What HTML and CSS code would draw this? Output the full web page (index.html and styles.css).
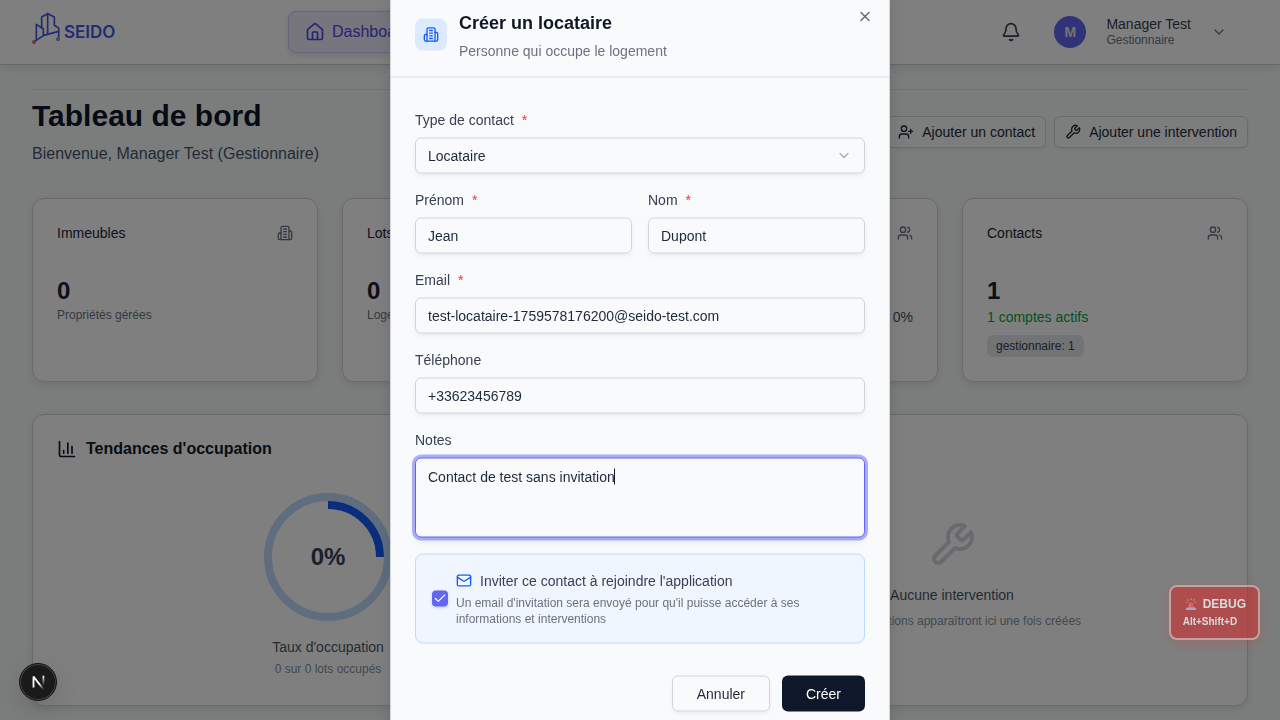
FILE: index.html
```html
<!DOCTYPE html>
<html lang="fr">
<head>
<meta charset="utf-8">
<meta name="viewport" content="width=device-width, initial-scale=1">
<title>SEIDO - Tableau de bord</title>
<link rel="stylesheet" href="styles.css">
</head>
<body>
<svg class="sprite" aria-hidden="true">
  <symbol id="i-home" viewBox="0 0 24 24"><path d="M15 21v-8a1 1 0 0 0-1-1h-4a1 1 0 0 0-1 1v8"/><path d="M3 10a2 2 0 0 1 .709-1.528l7-5.999a2 2 0 0 1 2.582 0l7 5.999A2 2 0 0 1 21 10v9a2 2 0 0 1-2 2H5a2 2 0 0 1-2-2z"/></symbol>
  <symbol id="i-bell" viewBox="0 0 24 24"><path d="M10.268 21a2 2 0 0 0 3.464 0"/><path d="M3.262 15.326A1 1 0 0 0 4 17h16a1 1 0 0 0 .74-1.673C19.41 13.956 18 12.499 18 8A6 6 0 0 0 6 8c0 4.499-1.411 5.956-2.738 7.326"/></symbol>
  <symbol id="i-chevron" viewBox="0 0 24 24"><path d="m6 9 6 6 6-6"/></symbol>
  <symbol id="i-user-plus" viewBox="0 0 24 24"><path d="M16 21v-2a4 4 0 0 0-4-4H6a4 4 0 0 0-4 4v2"/><circle cx="9" cy="7" r="4"/><path d="M19 8v6M22 11h-6"/></symbol>
  <symbol id="i-users" viewBox="0 0 24 24"><path d="M16 21v-2a4 4 0 0 0-4-4H6a4 4 0 0 0-4 4v2"/><circle cx="9" cy="7" r="4"/><path d="M22 21v-2a4 4 0 0 0-3-3.87"/><path d="M16 3.13a4 4 0 0 1 0 7.75"/></symbol>
  <symbol id="i-wrench" viewBox="0 0 24 24"><path d="M14.7 6.3a1 1 0 0 0 0 1.4l1.6 1.6a1 1 0 0 0 1.4 0l3.77-3.77a6 6 0 0 1-7.94 7.94l-6.91 6.91a2.12 2.12 0 0 1-3-3l6.91-6.91a6 6 0 0 1 7.94-7.94l-3.76 3.76z"/></symbol>
  <symbol id="i-building" viewBox="0 0 24 24"><path d="M6 22V4a2 2 0 0 1 2-2h8a2 2 0 0 1 2 2v18Z"/><path d="M6 12H4a2 2 0 0 0-2 2v6a2 2 0 0 0 2 2h2"/><path d="M18 9h2a2 2 0 0 1 2 2v9a2 2 0 0 1-2 2h-2"/><path d="M10 6h4M10 10h4M10 14h4M10 18h4"/></symbol>
  <symbol id="i-chart" viewBox="0 0 24 24"><path d="M3 3v16a2 2 0 0 0 2 2h16"/><path d="M18 17V9M13 17V5M8 17v-3"/></symbol>
  <symbol id="i-mail" viewBox="0 0 24 24"><rect width="20" height="16" x="2" y="4" rx="2"/><path d="m22 7-8.97 5.7a1.94 1.94 0 0 1-2.06 0L2 7"/></symbol>
  <symbol id="i-x" viewBox="0 0 24 24"><path d="M18 6 6 18M6 6l12 12"/></symbol>
  <symbol id="i-check" viewBox="0 0 24 24"><path d="M20 6 9 17l-5-5"/></symbol>
</svg>

<header class="topbar">
  <a class="brand" href="#">
    <svg class="brand-mark" viewBox="96 33 84 96" aria-hidden="true">
      <g fill="none" stroke="#4558e6" stroke-width="5" stroke-linejoin="round" stroke-linecap="round">
        <path d="M109 117V70l21 14v18"/>
        <path d="M125 80V48l18-10 20 10v25l13 8v30"/>
        <path d="M143 38v60"/>
        <path d="M104 121l27-18 45-12"/>
      </g>
      <circle cx="102" cy="123" r="6" fill="#e0705f"/>
      <circle cx="174" cy="115" r="6" fill="#6fb08c"/>
    </svg>
    <span class="brand-name">SEIDO</span>
  </a>
  <nav class="nav">
    <a class="nav-link" href="#"><svg class="icon icon-20"><use href="#i-home"/></svg>Dashboard</a>
  </nav>
  <div class="account">
    <button class="bell" type="button" aria-label="Notifications"><svg class="icon icon-20"><use href="#i-bell"/></svg></button>
    <button class="user" type="button">
      <span class="avatar">M</span>
      <span class="user-text"><span class="user-name">Manager Test</span><span class="user-role">Gestionnaire</span></span>
      <svg class="icon icon-16 user-arrow"><use href="#i-chevron"/></svg>
    </button>
  </div>
</header>

<main class="page">
  <section class="page-head">
    <div>
      <h1 class="page-title">Tableau de bord</h1>
      <p class="page-subtitle">Bienvenue, Manager Test (Gestionnaire)</p>
    </div>
    <div class="page-actions">
      <button class="action" type="button"><svg class="icon icon-16"><use href="#i-user-plus"/></svg>Ajouter un contact</button>
      <button class="action" type="button"><svg class="icon icon-16"><use href="#i-wrench"/></svg>Ajouter une intervention</button>
    </div>
  </section>

  <section class="stats">
    <article class="card stat">
      <header class="stat-head"><h2 class="stat-title">Immeubles</h2><svg class="icon icon-16"><use href="#i-building"/></svg></header>
      <p class="stat-value">0</p>
      <p class="stat-note">Propriétés gérées</p>
    </article>
    <article class="card stat">
      <header class="stat-head"><h2 class="stat-title">Lots</h2></header>
      <p class="stat-value">0</p>
      <p class="stat-note">Logements</p>
    </article>
    <article class="card stat">
      <header class="stat-head"><h2 class="stat-title">Occupés</h2><svg class="icon icon-16"><use href="#i-users"/></svg></header>
      <p class="stat-value">0</p>
      <p class="stat-rate">0%</p>
    </article>
    <article class="card stat">
      <header class="stat-head"><h2 class="stat-title">Contacts</h2><svg class="icon icon-16"><use href="#i-users"/></svg></header>
      <p class="stat-value">1</p>
      <p class="stat-active">1 comptes actifs</p>
      <span class="badge">gestionnaire: 1</span>
    </article>
  </section>

  <section class="panels">
    <article class="card panel">
      <h2 class="panel-title"><svg class="icon icon-20"><use href="#i-chart"/></svg>Tendances d'occupation</h2>
      <div class="occupancy">
        <div class="gauge">
          <svg class="gauge-ring" viewBox="0 0 128 128" fill="none" stroke-width="8" aria-hidden="true">
            <circle cx="64" cy="64" r="60" stroke="#bfdbfe"/>
            <path d="M64 12a52 52 0 0 1 52 52" stroke="#155dfc"/>
          </svg>
          <span class="gauge-value">0%</span>
        </div>
        <p class="panel-text">Taux d'occupation</p>
        <p class="panel-note">0 sur 0 lots occupés</p>
      </div>
    </article>
    <article class="card panel">
      <div class="empty">
        <svg class="icon icon-48"><use href="#i-wrench"/></svg>
        <p class="panel-text">Aucune intervention</p>
        <p class="panel-note">Les interventions apparaîtront ici une fois créées</p>
      </div>
    </article>
  </section>
</main>

<div class="overlay"></div>

<div class="dialog" role="dialog" aria-modal="true" aria-labelledby="dialog-title">
  <header class="dialog-head">
    <span class="dialog-icon"><svg class="icon icon-16"><use href="#i-building"/></svg></span>
    <div>
      <h2 class="dialog-title" id="dialog-title">Créer un locataire</h2>
      <p class="dialog-desc">Personne qui occupe le logement</p>
    </div>
  </header>
  <form class="form">
    <div class="field">
      <label class="label" for="type">Type de contact <span class="required">*</span></label>
      <div class="select-wrap">
        <select class="control" id="type"><option>Locataire</option></select>
        <svg class="icon icon-16 select-arrow"><use href="#i-chevron"/></svg>
      </div>
    </div>
    <div class="field-row">
      <div class="field">
        <label class="label" for="first">Prénom <span class="required">*</span></label>
        <input class="control" id="first" type="text" value="Jean">
      </div>
      <div class="field">
        <label class="label" for="last">Nom <span class="required">*</span></label>
        <input class="control" id="last" type="text" value="Dupont">
      </div>
    </div>
    <div class="field">
      <label class="label" for="email">Email <span class="required">*</span></label>
      <input class="control" id="email" type="email" value="test-locataire-1759578176200@seido-test.com">
    </div>
    <div class="field">
      <label class="label" for="phone">Téléphone</label>
      <input class="control" id="phone" type="tel" value="+33623456789">
    </div>
    <div class="field">
      <label class="label" for="notes">Notes</label>
      <div class="notes-wrap">
        <textarea class="control notes is-active" id="notes">Contact de test sans invitation</textarea>
        <span class="caret"></span>
      </div>
    </div>
    <div class="invite">
      <span class="check">
        <input class="check-input" id="invite" type="checkbox" checked>
        <svg class="icon check-mark"><use href="#i-check"/></svg>
      </span>
      <div class="invite-body">
        <label class="invite-label" for="invite"><svg class="icon icon-16"><use href="#i-mail"/></svg>Inviter ce contact à rejoindre l'application</label>
        <p class="invite-note">Un email d'invitation sera envoyé pour qu'il puisse accéder à ses informations et interventions</p>
      </div>
    </div>
    <div class="form-actions">
      <button class="btn btn-outline" type="button">Annuler</button>
      <button class="btn btn-primary" type="submit">Créer</button>
    </div>
  </form>
  <button class="close" type="button" aria-label="Fermer"><svg class="icon icon-16"><use href="#i-x"/></svg></button>
</div>

<button class="dev-button" type="button" aria-label="Next.js">
  <svg class="dev-mark" viewBox="0 0 40 40" fill="none" aria-hidden="true">
    <defs>
      <linearGradient id="g1" x1="15" y1="14" x2="26" y2="27" gradientUnits="userSpaceOnUse"><stop offset=".6" stop-color="#fff"/><stop offset="1" stop-color="#fff" stop-opacity=".1"/></linearGradient>
      <linearGradient id="g2" x1="26" y1="13" x2="26" y2="24" gradientUnits="userSpaceOnUse"><stop stop-color="#fff"/><stop offset="1" stop-color="#fff" stop-opacity="0"/></linearGradient>
    </defs>
    <path d="M15 26V14l11 14" stroke="url(#g1)" stroke-width="2" stroke-linejoin="bevel"/>
    <path d="M26 13v11" stroke="url(#g2)" stroke-width="2"/>
  </svg>
</button>

<button class="debug" type="button">
  <span class="debug-title">
    <svg class="siren" viewBox="0 0 16 16" aria-hidden="true">
      <path d="M8 2v2M4.500 3l1 2M11.500 3l-1 2M3 6l1.500.500M13 6l-1.500.500" stroke="#f5c542" stroke-width=".8"/>
      <path d="M5 12l1-5q2-2 4 0l1 5z" fill="#f0506a"/>
      <path d="M7 8v3" stroke="#ff9bab" stroke-width=".8"/>
      <path d="M3 13q0-1.500 1.500-1.500h7q1.500 0 1.500 1.500v1h-10z" fill="#b7b9e6"/>
    </svg>DEBUG</span>
  <span class="debug-keys">Alt+Shift+D</span>
</button>
</body>
</html>
```

FILE: styles.css
```css
* { box-sizing: border-box; margin: 0; }

body {
  min-height: 100vh;
  overflow: hidden;
  background: #f7fbf9;
  color: #111827;
  font: 14px/20px "Liberation Sans", Arial, sans-serif;
}

button, input, select, textarea { font: inherit; color: inherit; }
button { background: none; border: 0; padding: 0; }
a { color: inherit; text-decoration: none; }

.sprite { position: absolute; width: 0; height: 0; }
.icon { flex: none; fill: none; stroke: currentColor; stroke-width: 2; stroke-linecap: round; stroke-linejoin: round; }
.icon-16 { width: 16px; height: 16px; }
.icon-20 { width: 20px; height: 20px; }
.icon-48 { width: 48px; height: 48px; }

/* Top bar */
.topbar {
  display: flex;
  align-items: center;
  height: 65px;
  padding: 0 32px;
  background: #fff;
  border-bottom: 1px solid #cbd0dc;
  box-shadow: 0 4px 8px rgba(15, 23, 42, .08);
}
.brand { flex: 0 0 256px; display: flex; align-items: center; gap: 4px; padding-bottom: 9px; }
.brand-mark { width: 28px; height: 32px; }
.brand-name { padding-top: 9px; color: #4558e6; font: 600 17px/20px Inter, sans-serif; }
.nav-link {
  display: flex;
  align-items: center;
  gap: 7px;
  height: 42px;
  padding: 0 16px;
  border: 1px solid #cfcaf8;
  border-radius: 8px;
  background: #eeebfd;
  box-shadow: 0 2px 6px rgba(15, 23, 42, .12);
  color: #5048e5;
  font-size: 16px;
}
.account { display: flex; align-items: center; margin-left: auto; padding-right: 21px; color: #364153; }
.bell { display: flex; padding: 10px; margin-right: 23px; }
.user { display: flex; align-items: center; text-align: left; }
.avatar {
  display: grid;
  place-items: center;
  width: 32px;
  height: 32px;
  margin-right: 20px;
  border-radius: 50%;
  background: #6366f1;
  color: #e8e8ec;
  font-weight: bold;
}
.user-text { display: grid; margin-right: 20px; line-height: 16px; }
.user-role { color: #6a7282; font-size: 12px; }
.user-arrow { color: #6a7282; }

/* Page */
.page { display: grid; gap: 32px; margin: 24px 32px; border-top: 1px solid #e1e6e4; }
.page-head { display: flex; justify-content: space-between; align-items: center; padding-top: 8px; min-height: 76px; }
.page-title { font: bold 30px/36px "Liberation Sans", Arial, sans-serif; color: #0f172b; }
.page-subtitle { margin-top: 8px; color: #45556c; font-size: 16px; line-height: 24px; }
.page-actions { display: flex; gap: 8px; }
.action {
  display: flex;
  align-items: center;
  gap: 8px;
  height: 32px;
  padding: 0 10px;
  border: 1px solid #d1d5db;
  border-radius: 6px;
  background: #f9fafb;
  box-shadow: 0 2px 4px rgba(15, 23, 42, .06);
  color: #1e293b;
}
.card {
  border: 1px solid #d1d5d9;
  border-radius: 12px;
  background: #fff;
  box-shadow: 0 3px 8px rgba(15, 23, 42, .1);
}
.stats { display: grid; grid-template-columns: repeat(4, 1fr); gap: 24px; }
.stat { min-height: 184px; padding: 24px; }
.stat-head { display: flex; justify-content: space-between; align-items: center; margin-bottom: 32px; color: #6a7282; }
.stat-title { font-size: 14px; line-height: 20px; font-weight: normal; color: #1e2433; }
.stat-value { font-size: 24px; line-height: 32px; font-weight: bold; color: #1b2130; }
.stat-note { color: #6a7282; font-size: 12px; line-height: 16px; }
.stat-rate { text-align: right; color: #45505f; }
.stat-active { color: #00a63e; }
.badge {
  display: inline-block;
  margin-top: 8px;
  padding: 3px 9px;
  border-radius: 6px;
  background: #e2e6eb;
  color: #334155;
  font-size: 12px;
  line-height: 16px;
}
.panels { display: grid; grid-template-columns: 1fr 1fr; gap: 32px; }
.panel { min-height: 292px; padding: 24px; display: flex; flex-direction: column; }
.panel-title { display: flex; align-items: center; gap: 9px; font-size: 16px; line-height: 20px; }
.occupancy { display: grid; justify-items: center; padding-top: 34px; }
.gauge { display: grid; place-items: center; width: 128px; height: 128px; margin-bottom: 16px; }
.gauge-ring, .gauge-value { grid-area: 1 / 1; }
.gauge-ring { width: 128px; height: 128px; }
.gauge-value { font-size: 24px; line-height: 32px; font-weight: bold; color: #364153; }
.panel-text { color: #4a5565; }
.panel-note { margin-top: 4px; color: #8a90a0; font-size: 12px; line-height: 16px; }
.empty { display: grid; justify-items: center; margin: auto; padding-top: 29px; color: #d1d5db; }
.empty .panel-text { margin-top: 16px; }
.empty .panel-note { margin-top: 8px; }

/* Dialog */
.overlay { position: fixed; inset: 0; background: rgba(0, 0, 0, .5); }
.dialog {
  position: fixed;
  top: 50%;
  left: 50%;
  width: 500px;
  max-width: 100%;
  transform: translate(-50%, -50%);
  border: 1px solid #d1d5db;
  background: #f9fafc;
  box-shadow: 0 8px 16px rgba(0, 0, 0, .12);
}
.dialog-head { display: flex; align-items: center; gap: 12px; padding: 16px 24px; border-bottom: 1px solid #d9dce6; }
.dialog-icon { display: grid; place-items: center; width: 32px; height: 32px; border-radius: 8px; background: #dbeafe; color: #155dfc; }
.dialog-title { font-size: 18px; line-height: 28px; color: #101828; }
.dialog-desc { margin-top: 4px; color: #6a7282; }
.close { position: absolute; top: 16px; right: 16px; display: flex; color: #5d6470; }

.form { display: grid; gap: 16px; padding: 32px 24px 16px; }
.field { display: grid; gap: 8px; min-width: 0; }
.field-row { display: grid; grid-template-columns: 1fr 1fr; gap: 16px; }
.label { color: #364153; }
.required { margin-left: 4px; color: #fb2c36; }
.control {
  display: block;
  width: 100%;
  height: 36px;
  padding: 0 12px;
  border: 1px solid #d1d5db;
  border-radius: 6px;
  outline: 0;
  appearance: none;
  background: #f9fafc;
  box-shadow: 0 2px 4px rgba(15, 23, 42, .05);
  color: #1e293b;
}
.select-wrap, .notes-wrap { position: relative; }
.select-arrow { position: absolute; top: 10px; right: 13px; color: #a9adb9; pointer-events: none; }
.notes { height: 80px; padding: 8px 12px; resize: none; }
.is-active { border-color: #6366f1; box-shadow: 0 0 0 3px rgba(99, 102, 241, .5), 0 4px 6px rgba(15, 23, 42, .08); }
.caret { position: absolute; top: 11px; left: 199px; width: 1px; height: 16px; background: #111827; }

.invite { display: flex; align-items: center; gap: 8px; padding: 16px; border: 1px solid #bedbff; border-radius: 8px; background: #eff6ff; }
.check { display: grid; place-items: center; }
.check-input { grid-area: 1 / 1; width: 16px; height: 16px; margin: 0; border-radius: 4px; appearance: none; background: #6366f1; box-shadow: 0 1px 3px rgba(15, 23, 42, .15); }
.check-mark { grid-area: 1 / 1; width: 14px; height: 14px; color: #fff; pointer-events: none; }
.invite-label { display: flex; align-items: center; gap: 8px; color: #364153; }
.invite-label .icon { color: #155dfc; }
.invite-note { margin-top: 4px; color: #6a7282; font-size: 12px; line-height: 16px; }

.form-actions { display: flex; justify-content: flex-end; gap: 12px; padding-top: 16px; }
.btn { height: 36px; padding: 0 24px; border-radius: 6px; }
.btn-outline { border: 1px solid #d1d5db; background: #f9fafc; box-shadow: 0 2px 4px rgba(15, 23, 42, .05); color: #1e293b; }
.btn-primary { background: #0f172a; color: #fff; }

/* Floating tools */
.dev-button {
  position: fixed;
  left: 19px;
  bottom: 19px;
  width: 38px;
  height: 38px;
  border: 1px solid #161616;
  border-radius: 50%;
  background: #1a1a1a;
  box-shadow: inset 0 0 0 1px #444, 0 8px 24px rgba(0, 0, 0, .12);
}
.dev-mark { display: block; width: 36px; height: 36px; }
.debug {
  position: fixed;
  right: 20px;
  bottom: 80px;
  display: grid;
  gap: 2px;
  padding: 9px 12px 8px;
  border: 2px solid rgba(255, 255, 255, .6);
  border-radius: 8px;
  background: #c0383a;
  box-shadow: 0 4px 12px rgba(255, 0, 0, .2);
  opacity: .7;
  color: #fff;
  font-weight: bold;
  font-size: 12px;
  line-height: 16px;
  text-align: left;
}
.debug-title { display: flex; align-items: center; gap: 4px; }
.siren { width: 16px; height: 16px; fill: none; }
.debug-keys { font-size: 10px; }
```
